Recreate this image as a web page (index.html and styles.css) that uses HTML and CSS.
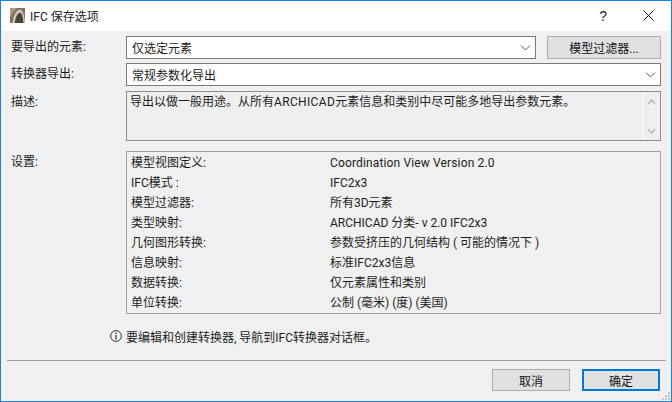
FILE: index.html
```html
<!DOCTYPE html>
<html lang="zh-CN">
<head>
<meta charset="utf-8">
<title>IFC 保存选项</title>
<link rel="stylesheet" href="styles.css">
</head>
<body>
<div class="window">
  <header class="titlebar">
    <svg class="app-icon" width="15" height="15" viewBox="0 0 15 15">
      <rect width="15" height="15" fill="#7d7264"/>
      <path d="M0 15V10L3 4 7 0H0Z" fill="#a89e8c"/>
      <path d="M5 15C6 9 8 5 10 5 12 5 13 9 13.500 15Z" fill="#4a4238"/>
      <path d="M2.500 15C3.500 8 6 2 10 1.500 13 2 14.500 8 15 15H13.500C13 9 12 4.500 10 4.500 7.500 4.500 5.500 9 4.500 15Z" fill="#d6ccb6"/>
    </svg>
    <span class="title">IFC 保存选项</span>
    <span class="help">?</span>
    <svg class="close" width="11" height="11" viewBox="0 0 11 11"><path d="M0.500 0.500L10.500 10.500M10.500 0.500L0.500 10.500" stroke="#111" stroke-width="1" fill="none"/></svg>
  </header>
  <main class="content">
    <div class="row row-first">
      <label class="label">要导出的元素:</label>
      <div class="combo combo-short"><span>仅选定元素</span>
        <svg class="chev" width="11" height="6" viewBox="0 0 11 6"><path d="M1 0.500L5.500 5 10 0.500" stroke="#555" fill="none"/></svg>
      </div>
      <button class="btn btn-filter">模型过滤器...</button>
    </div>
    <div class="row row-second">
      <label class="label">转换器导出:</label>
      <div class="combo"><span>常规参数化导出</span>
        <svg class="chev" width="11" height="6" viewBox="0 0 11 6"><path d="M1 0.500L5.500 5 10 0.500" stroke="#555" fill="none"/></svg>
      </div>
    </div>
    <div class="row row-desc">
      <label class="label label-top">描述:</label>
      <div class="desc">
        <p class="desc-text">导出以做一般用途。从所有<span class="wide-caps">ARCHICAD</span>元素信息和类别中尽可能多地导出参数元素。</p>
        <div class="scrollbar">
          <svg width="9" height="6" viewBox="0 0 9 6"><path d="M1 5L4.500 1 8 5" stroke="#b4b4b4" stroke-width="1.300" fill="none"/></svg>
          <svg width="9" height="6" viewBox="0 0 9 6"><path d="M1 1L4.500 5 8 1" stroke="#b4b4b4" stroke-width="1.300" fill="none"/></svg>
        </div>
      </div>
    </div>
    <div class="row row-settings">
      <label class="label label-top">设置:</label>
      <div class="settings">
        <span>模型视图定义:</span><span class="wide-text">Coordination View Version 2.0</span>
        <span>IFC模式 :</span><span>IFC2x3</span>
        <span>模型过滤器:</span><span>所有3D元素</span>
        <span>类型映射:</span><span>ARCHICAD 分类- v 2.0 IFC2x3</span>
        <span>几何图形转换:</span><span>参数受挤压的几何结构 ( 可能的情况下 )</span>
        <span>信息映射:</span><span>标准IFC2x3信息</span>
        <span>数据转换:</span><span>仅元素属性和类别</span>
        <span>单位转换:</span><span>公制 (毫米) (度) (美国)</span>
      </div>
    </div>
    <div class="info">
      <svg width="12" height="12" viewBox="0 0 12 12"><circle cx="6" cy="6" r="5.400" fill="none" stroke="#333" stroke-width="1"/><path d="M6 5V9.500" stroke="#333" stroke-width="1.200"/><rect x="5.300" y="2.600" width="1.400" height="1.400" fill="#333"/></svg>
      <span>要编辑和创建转换器, 导航到IFC转换器对话框。</span>
    </div>
    <hr class="sep">
    <div class="actions">
      <button class="btn btn-action">取消</button>
      <button class="btn btn-action btn-default">确定</button>
    </div>
  </main>
  <svg class="grip" width="9" height="9" viewBox="0 0 9 9"><path d="M7 1h2v2H7zM4 4h2v2H4zM7 4h2v2H7zM1 7h2v2H1zM4 7h2v2H4zM7 7h2v2H7z" fill="#c4c4c4"/></svg>
</div>
</body>
</html>
```
FILE: styles.css
```css
* { box-sizing: border-box; }
html, body { margin: 0; padding: 0; }
body {
  width: 672px;
  height: 402px;
  overflow: hidden;
  font-family: Roboto, "Noto Sans CJK SC", "Liberation Sans", sans-serif;
  font-size: 12px;
  color: #1c1c1c;
}
.window {
  position: relative;
  width: 672px;
  height: 402px;
  border: 1px solid #1883d7;
  background: #f0f0f0;
  display: flex;
  flex-direction: column;
}
.titlebar {
  height: 30px;
  background: #fff;
  display: flex;
  align-items: center;
  padding: 0 0 1px 9px;
  flex: none;
}
.app-icon { flex: none; }
.title { margin-left: 5px; font-size: 12px; color: #222; }
.help { margin-left: auto; margin-right: 36px; font-size: 14px; color: #222; font-family: "Liberation Sans", sans-serif; }
.close { margin-right: 17px; }
.content { display: flex; flex-direction: column; padding-left: 10px; flex: 1; }
.row { display: flex; }
.row-first { margin-top: 5px; height: 23px; }
.row-second { margin-top: 4px; height: 23px; }
.row-desc { margin-top: 5px; height: 50px; }
.row-settings { margin-top: 10px; height: 163px; }
.label { width: 115px; flex: none; line-height: 23px; }
.label-top { line-height: 16px; padding-top: 3px; }
.combo {
  width: 535px;
  height: 23px;
  background: #fff;
  border: 1px solid #7a7a7a;
  display: flex;
  align-items: center;
  justify-content: space-between;
  padding: 0 4px 0 5px;
}
.combo-short { width: 410px; }
.chev { flex: none; }
.btn {
  font: inherit;
  color: #111;
  background: #e1e1e1;
  border: 1px solid #adadad;
  padding: 0;
}
.btn-filter { width: 114px; height: 23px; margin-left: 11px; }
.desc {
  width: 535px;
  height: 50px;
  border: 1px solid #8e8e8e;
  background: #efefef;
  display: flex;
}
.desc-text { margin: 0; flex: 1; padding: 2px 3px; line-height: 16px; }
.wide-caps { letter-spacing: 0.35px; }
.wide-text { letter-spacing: 0.14px; }
.scrollbar {
  width: 18px;
  border-left: 1px solid #fff;
  display: flex;
  flex-direction: column;
  justify-content: space-between;
  align-items: center;
  padding: 7px 0 6px;
}
.settings {
  width: 535px;
  height: 163px;
  border: 1px solid #a0a0a0;
  display: grid;
  grid-template-columns: 199px 1fr;
  grid-auto-rows: 20px;
  padding: 1px 0 0 4px;
  line-height: 20px;
  align-content: start;
}
.info {
  margin-top: 13px;
  height: 18px;
  display: flex;
  align-items: center;
  gap: 4px;
  padding-left: 99px;
}
.sep { width: 659px; margin: 15px 0 0 -4px; border: 0; border-top: 1px solid #a0a0a0; height: 0; }
.actions { display: flex; justify-content: flex-end; gap: 12px; margin-top: 8px; width: 649px; }
.btn-action { width: 78px; height: 22px; }
.btn-default { border: 2px solid #0078d7; }
.grip { position: absolute; right: 1px; bottom: 1px; }
```
